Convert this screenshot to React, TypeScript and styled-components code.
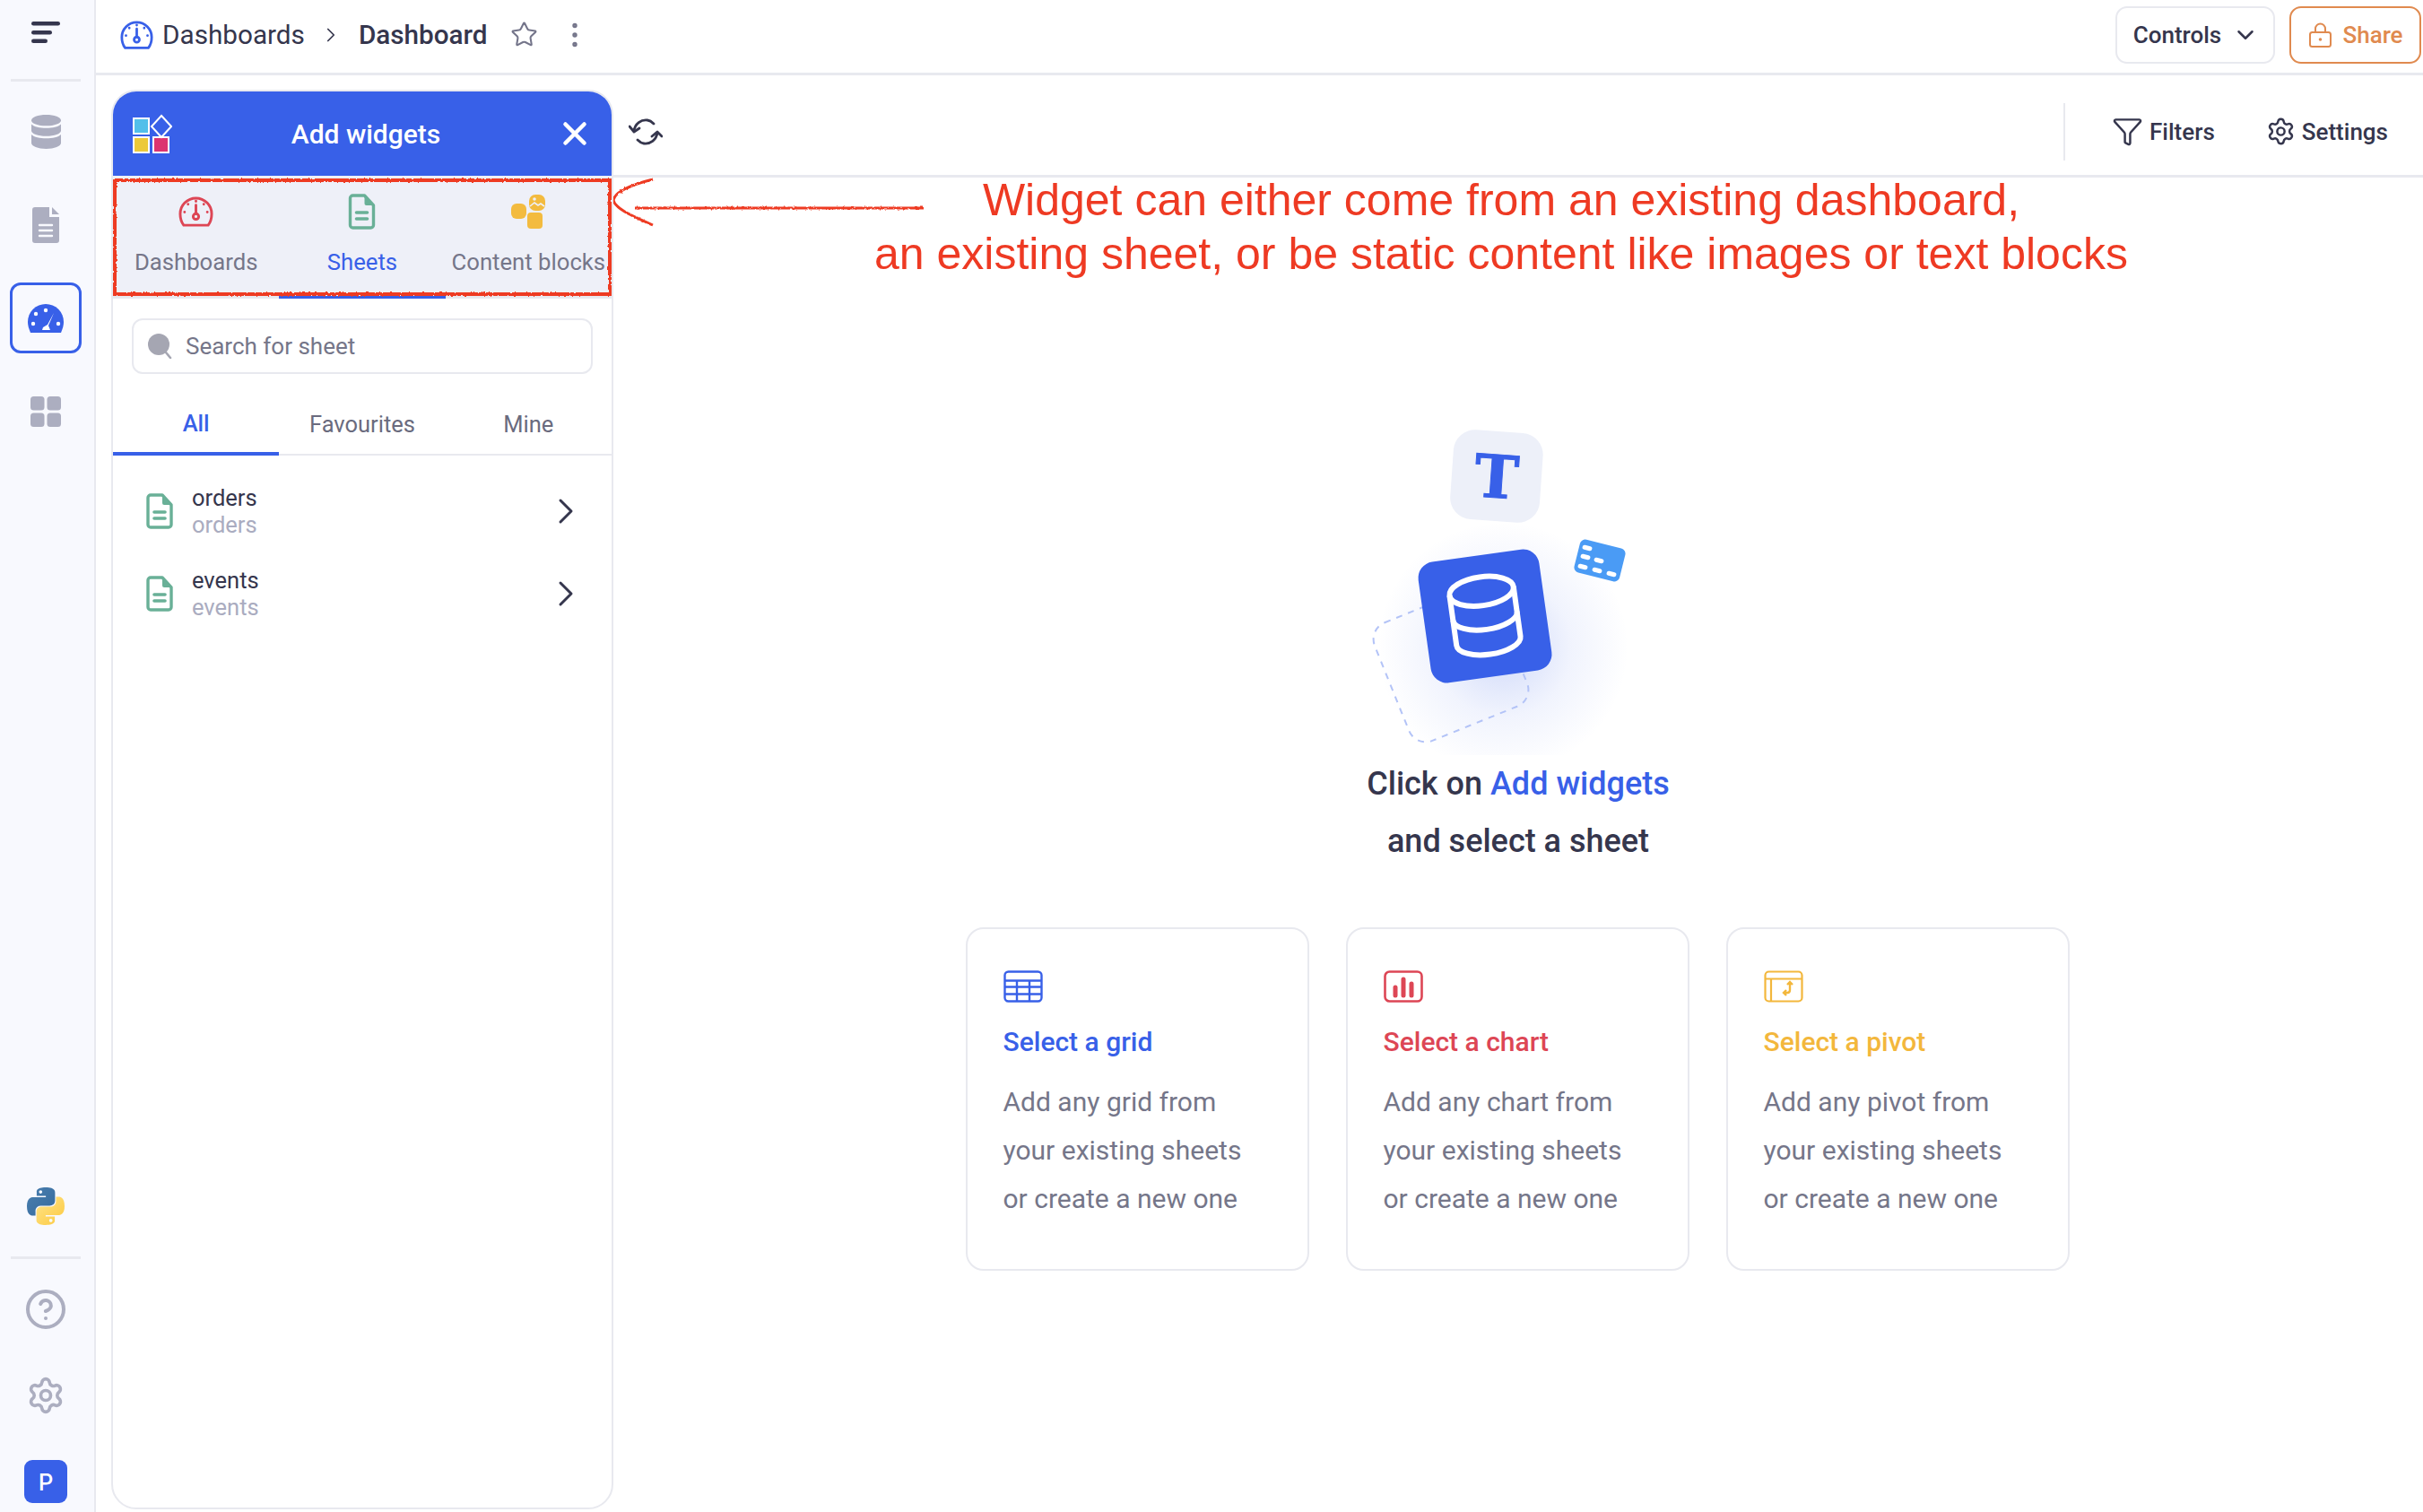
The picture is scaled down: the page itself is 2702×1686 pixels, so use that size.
import React from 'react'
import styled, { createGlobalStyle } from 'styled-components'
import { ChevronDown, ChevronRight, CircleHelp, EllipsisVertical, Funnel, Settings, Star, X } from 'lucide-react'

const BLUE = '#3860e8'
const RED = '#ee3a23'
const LINE = '#e8e9ef'
const INK = '#35364d'
const GREY = '#757689'

const GlobalStyle = createGlobalStyle`
  html, body {
    margin: 0;
    padding: 0;
    background: #fff;
  }
  * {
    box-sizing: border-box;
  }
  body {
    font-family: Roboto, "Liberation Sans", sans-serif;
    color: ${INK};
  }
`

const Page = styled.div`
  display: flex;
  height: 1686px;
  overflow: hidden;
  width: 2702px;
`

const Sidebar = styled.nav`
  align-items: center;
  background: #f8f9fe;
  border-right: 2px solid ${LINE};
  display: flex;
  flex-direction: column;
  flex-shrink: 0;
  height: 100%;
  padding: 0 3px 10px 0;
  width: 107px;
`

const SideTop = styled.div`
  align-items: center;
  display: flex;
  height: 88px;
  justify-content: center;
  padding-bottom: 16px;
`

const SideDivider = styled.div`
  background: ${LINE};
  flex-shrink: 0;
  height: 3px;
  width: 78px;
`

const NavSlots = styled.div`
  display: flex;
  flex-direction: column;
  gap: 25px;
  margin-top: 16px;
`

const NavSlot = styled.div<{ $active?: boolean }>`
  align-items: center;
  border: 3px solid ${(p) => (p.$active ? BLUE : 'transparent')};
  border-radius: 12px;
  display: flex;
  height: 79px;
  justify-content: center;
  width: 80px;
`

const SideBottom = styled.div`
  align-items: center;
  display: flex;
  flex-direction: column;
  gap: 32px;
  margin-top: auto;
`

const BottomIcons = styled.div`
  align-items: center;
  color: #acaec0;
  display: flex;
  flex-direction: column;
  gap: 48px;
`

const BottomSlot = styled.div`
  align-items: center;
  display: flex;
  height: 48px;
  justify-content: center;
  width: 48px;
`

const Avatar = styled.div`
  align-items: center;
  background: ${BLUE};
  border-radius: 9px;
  color: #fff;
  display: flex;
  font-family: Inter, sans-serif;
  font-size: 26px;
  font-weight: 500;
  height: 48px;
  justify-content: center;
  width: 48px;
`

const Content = styled.div`
  display: flex;
  flex: 1;
  flex-direction: column;
  min-width: 0;
`

const TopBar = styled.header`
  align-items: center;
  border-bottom: 3px solid ${LINE};
  display: flex;
  flex-shrink: 0;
  height: 84px;
  padding: 0 2px 4px 27px;
`

const Crumb = styled.span<{ $current?: boolean }>`
  font-size: 29.7px;
  font-weight: ${(p) => (p.$current ? 500 : 400)};
  margin-left: ${(p) => (p.$current ? 18 : 10)}px;
`

const CrumbSep = styled.span`
  align-items: center;
  color: ${INK};
  display: flex;
  margin-left: 16px;
`

const FavIcon = styled.span`
  color: #74758a;
  display: flex;
  margin-left: 25px;
`

const MoreIcon = styled.span`
  color: #74758a;
  display: flex;
  margin-left: 23px;
`

const TopActions = styled.div`
  display: flex;
  gap: 16px;
  margin-left: auto;
`

const TopButton = styled.button<{ $accent?: boolean }>`
  align-items: center;
  background: #fff;
  border: 2px solid ${(p) => (p.$accent ? '#e08a4f' : LINE)};
  border-radius: 13px;
  color: ${(p) => (p.$accent ? '#e08a4f' : INK)};
  display: flex;
  font-family: inherit;
  font-size: 26px;
  font-weight: 500;
  gap: 12px;
  height: 64px;
  justify-content: center;
  padding: 0 0 0 2px;
  width: ${(p) => (p.$accent ? 147 : 178)}px;
`

const Body = styled.div`
  display: flex;
  flex: 1;
  min-height: 0;
`

const Panel = styled.aside`
  background: #fff;
  border: 2px solid ${LINE};
  border-radius: 28px;
  display: flex;
  flex-direction: column;
  flex-shrink: 0;
  margin: 16px 0 3px 17px;
  overflow: hidden;
  width: 560px;
`

const PanelHead = styled.div`
  align-items: center;
  background: ${BLUE};
  color: #fff;
  display: flex;
  flex-shrink: 0;
  font-size: 30px;
  font-weight: 500;
  height: 94px;
  justify-content: space-between;
  padding: 0 20px 0 22px;
`

const PanelTitle = styled.span`
  margin-left: 4px;
`

const SourceTabs = styled.div`
  background: #eef0f8;
  border-bottom: 3px solid ${LINE};
  display: grid;
  flex-shrink: 0;
  grid-template-columns: repeat(3, 1fr);
  height: 137px;
  position: relative;
`

const SourceTab = styled.div<{ $active?: boolean }>`
  align-items: center;
  color: ${(p) => (p.$active ? BLUE : GREY)};
  display: flex;
  flex-direction: column;
  font-size: 25.7px;
  gap: 16px;
  padding-top: 20px;
  position: relative;

  ${(p) =>
    p.$active &&
    `&::after {
      background: ${BLUE};
      bottom: -3px;
      content: '';
      height: 3px;
      left: 0;
      position: absolute;
      right: 0;
    }`}
`

const SourceIcon = styled.div`
  align-items: center;
  display: flex;
  height: 40px;
  justify-content: center;
`

const SourceLabel = styled.span`
  line-height: 40px;
  white-space: nowrap;
`

const MarkBox = styled.div`
  border: 4px solid ${RED};
  filter: url(#rough);
  inset: 3px 0 0 0;
  pointer-events: none;
  position: absolute;
`

const Search = styled.div`
  align-items: center;
  border: 2px solid ${LINE};
  border-radius: 12px;
  color: ${GREY};
  display: flex;
  flex-shrink: 0;
  font-size: 26px;
  gap: 15px;
  height: 62px;
  margin: 22px 21px 0 21px;
  padding-left: 16px;
`

const ScopeTabs = styled.div`
  border-bottom: 2px solid ${LINE};
  display: grid;
  flex-shrink: 0;
  grid-template-columns: repeat(3, 1fr);
  height: 68px;
  margin-top: 23px;
`

const ScopeTab = styled.div<{ $active?: boolean }>`
  align-items: center;
  border-bottom: ${(p) => (p.$active ? `4px solid ${BLUE}` : 'none')};
  color: ${(p) => (p.$active ? BLUE : '#6a6b7e')};
  display: flex;
  font-size: 25.5px;
  font-weight: ${(p) => (p.$active ? 500 : 400)};
  height: ${(p) => (p.$active ? 68 : 66)}px;
  justify-content: center;
`

const SheetList = styled.div`
  display: flex;
  flex-direction: column;
  margin-top: 16px;
`

const SheetRow = styled.div`
  align-items: center;
  display: flex;
  height: 92px;
  padding: 0 27px 0 37px;
`

const SheetText = styled.div`
  display: flex;
  flex-direction: column;
  font-size: 25.5px;
  line-height: 30px;
  margin-left: 21px;
`

const SheetSub = styled.span`
  color: #aaacc0;
`

const SheetChevron = styled.span`
  color: ${INK};
  display: flex;
  margin-left: auto;
`

const Main = styled.main`
  display: flex;
  flex: 1;
  flex-direction: column;
  min-width: 0;
  position: relative;
`

const Toolbar = styled.div`
  align-items: center;
  border-bottom: 3px solid ${LINE};
  display: flex;
  flex-shrink: 0;
  height: 114px;
  padding: 14px 39px 0 17px;
`

const ToolDivider = styled.div`
  background: ${LINE};
  height: 64px;
  margin-left: auto;
  width: 2px;
`

const ToolItem = styled.div<{ $offset: number }>`
  align-items: center;
  display: flex;
  font-size: 26px;
  font-weight: 500;
  gap: 7px;
  margin-left: ${(p) => p.$offset}px;
`

const Canvas = styled.div`
  align-items: center;
  display: flex;
  flex: 1;
  flex-direction: column;
  padding-top: 252px;
`

const Prompt = styled.div`
  font-size: 36px;
  font-weight: 500;
  line-height: 64px;
  text-align: center;
`

const PromptLink = styled.span`
  color: ${BLUE};
`

const Cards = styled.div`
  display: flex;
  gap: 41px;
  margin: 64px 2px 0 0;
`

const Card = styled.div`
  border: 2px solid ${LINE};
  border-radius: 20px;
  height: 383px;
  padding: 46px 0 0 40px;
  width: 383px;
`

const CardIcon = styled.div`
  display: flex;
  height: 36px;
`

const CardTitle = styled.div<{ $color: string }>`
  color: ${(p) => p.$color};
  font-size: 30px;
  font-weight: 500;
  line-height: 40px;
  margin-top: 24px;
`

const CardBody = styled.div`
  color: ${GREY};
  font-size: 30px;
  line-height: 54px;
  margin-top: 20px;
`

const Note = styled.div`
  color: ${RED};
  font-family: "Liberation Sans", Arial, sans-serif;
  font-size: 50px;
  left: 291px;
  line-height: 60px;
  position: absolute;
  text-align: center;
  top: 109px;
  white-space: nowrap;
`

const NoteArrow = styled.svg`
  filter: url(#rough);
  left: 0;
  position: absolute;
  top: 114px;
`

const HiddenDefs = styled.svg`
  height: 0;
  position: absolute;
  width: 0;
`

const GaugeOutline = ({ color, size }: { color: string; size: number }) => (
  <svg width={size} height={size * 0.9} viewBox="0 0 40 36" fill="none" stroke={color} strokeWidth="3" strokeLinecap="round">
    <path d="M6 34 C3 30 2 26 2 21 A18 18 0 0 1 38 21 C38 26 37 30 34 34 Z" />
    <circle cx="20" cy="24" r="3.2" />
    <path d="M20 20.5V11M20 6.5v.1M11 10v.1M29 10v.1M7 19v.1M33 19v.1" />
  </svg>
)

const SheetIcon = ({ color, width, height }: { color: string; width: number; height: number }) => (
  <svg width={width} height={height} viewBox="0 0 30 40" fill="none">
    <path d="M5 2h13l10 11v22a3 3 0 0 1-3 3H5a3 3 0 0 1-3-3V5a3 3 0 0 1 3-3z" stroke={color} strokeWidth="3.4" strokeLinejoin="round" />
    <path d="M18 2l10 11h-8a2 2 0 0 1-2-2z" fill={color} />
    <path d="M9 21h12M9 28h12" stroke={color} strokeWidth="3.6" strokeLinecap="round" />
  </svg>
)

const MenuGlyph = () => (
  <svg width="32" height="24" viewBox="0 0 32 24" fill="#35364d">
    <rect x="0" y="0" width="32" height="4.6" rx="2.3" />
    <rect x="0" y="10" width="23" height="4.6" rx="2.3" />
    <rect x="0" y="19.4" width="18" height="4.6" rx="2.3" />
  </svg>
)

const DatabaseFilled = () => (
  <svg width="33" height="38" viewBox="0 0 33 38" fill="#acaec0">
    <path d="M16.5 0C7.4 0 0 2.7 0 6.2s7.4 6.1 16.5 6.1S33 9.7 33 6.2 25.6 0 16.5 0z" />
    <path d="M0 10.5v7.3c0 3.4 7.4 6 16.5 6s16.5-2.6 16.5-6v-7.3c-3 3-9.4 4.3-16.5 4.3S3 13.5 0 10.5z" />
    <path d="M0 22v9.5C0 35 7.4 38 16.5 38S33 35 33 31.5V22c-3 3-9.4 4.3-16.5 4.3S3 25 0 22z" />
  </svg>
)

const DocFilled = () => (
  <svg width="30" height="40" viewBox="0 0 30 40">
    <path d="M3 0h16v11h11v26a3 3 0 0 1-3 3H3a3 3 0 0 1-3-3V3a3 3 0 0 1 3-3z" fill="#acaec0" />
    <path d="M22 0l8 8h-8z" fill="#acaec0" />
    <path d="M8 20h14M8 26h14M8 32h14" stroke="#f8f9fe" strokeWidth="2.4" strokeLinecap="round" />
  </svg>
)

const GaugeFilled = () => (
  <svg width="40" height="32" viewBox="0 0 40 32">
    <path d="M3 32C1 27 0 24 0 20a20 20 0 0 1 40 0c0 4-1 7-3 12z" fill={BLUE} />
    <circle cx="20" cy="7" r="2.2" fill="#fff" />
    <circle cx="9" cy="11" r="2.2" fill="#fff" />
    <circle cx="6" cy="22" r="2.2" fill="#fff" />
    <circle cx="34" cy="22" r="2.2" fill="#fff" />
    <path d="M29 10L23 24l2 5h-9l1-3 5-3z" fill="#fff" />
  </svg>
)

const GridFilled = () => (
  <svg width="34" height="34" viewBox="0 0 34 34" fill="#acaec0">
    <rect x="0" y="0" width="15.5" height="15.5" rx="3.5" />
    <rect x="18.5" y="0" width="15.5" height="15.5" rx="3.5" />
    <rect x="0" y="18.5" width="15.5" height="15.5" rx="3.5" />
    <rect x="18.5" y="18.5" width="15.5" height="15.5" rx="3.5" />
  </svg>
)

const PYTHON_HALF =
  'M54.9 0C26.9 0 28.6 12.2 28.6 12.2v12.6h26.7v3.8H18S0 26.5 0 54.9s15.7 27.4 15.7 27.4h9.4V69.1s-.5-15.7 15.5-15.7h26.6s15 .2 15-14.5V14.6S84.5 0 54.9 0zM40.1 8.5c2.7 0 4.8 2.2 4.8 4.8s-2.2 4.8-4.8 4.8-4.8-2.2-4.8-4.8 2.2-4.8 4.8-4.8z'

const PythonLogo = () => (
  <svg width="42" height="42" viewBox="0 0 110 110">
    <defs>
      <linearGradient id="py-blue" x1="0" y1="0" x2="1" y2="1">
        <stop offset="0" stopColor="#4a7fb0" />
        <stop offset="1" stopColor="#356a9c" />
      </linearGradient>
      <linearGradient id="py-yellow" x1="0" y1="0" x2="1" y2="1">
        <stop offset="0" stopColor="#fcc93f" />
        <stop offset="1" stopColor="#ffe48a" />
      </linearGradient>
    </defs>
    <path fill="url(#py-blue)" d={PYTHON_HALF} />
    <path fill="url(#py-yellow)" transform="rotate(180 55 55)" d={PYTHON_HALF} />
  </svg>
)

const WidgetsLogo = () => (
  <svg width="44" height="44" viewBox="0 0 44 44">
    <rect x="1" y="5" width="17" height="17" fill="#52bfea" stroke="#fff" strokeWidth="2" />
    <rect x="1" y="26" width="17" height="17" fill="#ecc93a" stroke="#fff" strokeWidth="2" />
    <rect x="23" y="26" width="17" height="17" fill="#dc3470" stroke="#fff" strokeWidth="2" />
    <path d="M32 2l11 12-11 12-11-12z" fill={BLUE} stroke="#fff" strokeWidth="2" />
  </svg>
)

const BlocksIcon = () => (
  <svg width="38" height="38" viewBox="0 0 38 38" fill="#f3bb3f">
    <rect x="0" y="10" width="17" height="17" rx="6" />
    <rect x="20" y="0" width="18" height="18" rx="7" />
    <circle cx="26" cy="5" r="1.8" fill="#eef0f8" />
    <path d="M21 13l5-4 4 3 3-2 4 3" fill="none" stroke="#eef0f8" strokeWidth="1.6" />
    <rect x="18" y="20" width="17" height="18" rx="4" />
  </svg>
)

const LockGlyph = () => (
  <svg width="25" height="28" viewBox="0 0 25 28" fill="none" stroke="#e08a4f" strokeWidth="2">
    <rect x="1" y="11" width="23" height="16" rx="2.5" />
    <path d="M7 11V7a5.5 5.5 0 0 1 11 0v4" />
    <circle cx="12.5" cy="19" r=".8" fill="#e08a4f" />
  </svg>
)

const RefreshGlyph = () => (
  <svg width="38" height="30" viewBox="0 0 38 30" fill="none" stroke={INK} strokeWidth="2.8" strokeLinecap="round" strokeLinejoin="round">
    <path d="M6 14C7 6 14 1 21 2c3 .4 5 2 7 4" />
    <path d="M1 9l5 6 6-4" />
    <path d="M32 16c-1 8-8 13-15 12-3-.4-5-2-7-4" />
    <path d="M26 20l6-5 5 5" />
  </svg>
)

const GridGlyph = () => (
  <svg width="44" height="36" viewBox="0 0 44 36" fill="none" stroke={BLUE} strokeWidth="2.4">
    <rect x="1.5" y="1.5" width="41" height="33" rx="4" />
    <path d="M1.5 11.5h41M1.5 18.5h41M1.5 26.5h41M15 12v22M29 12v22" />
  </svg>
)

const ChartGlyph = () => (
  <svg width="44" height="36" viewBox="0 0 44 36" fill="none">
    <rect x="1.5" y="1.5" width="41" height="33" rx="5" stroke="#dd4655" strokeWidth="2.6" />
    <path d="M13 28v-9M22 28V10M31 28V15" stroke="#dd4655" strokeWidth="5" strokeLinecap="round" />
  </svg>
)

const PivotGlyph = () => (
  <svg width="44" height="36" viewBox="0 0 44 36" fill="none" stroke="#f3b73c" strokeWidth="2.2">
    <rect x="1.5" y="1.5" width="41" height="33" rx="4" />
    <path d="M1.5 9.5h41M8 9.5v25" />
    <path d="M29 13v9c0 2-1 3-3 3h-4M26 16l3-3 3 3M25 22l-3 3 3 3" strokeWidth="2.4" />
  </svg>
)

const SearchGlyph = () => (
  <svg width="27" height="28" viewBox="0 0 27 28">
    <circle cx="12" cy="12" r="12" fill="#a5a6b2" />
    <path d="M20 21l5 6" stroke="#a5a6b2" strokeWidth="2.6" strokeLinecap="round" />
  </svg>
)

const tableDashes = [[289, 161], [287, 171], [302, 175], [284, 182], [300, 186], [316, 190]]

const Illustration = () => (
  <svg width="424" height="392" viewBox="0 0 424 392">
    <defs>
      <radialGradient id="glow">
        <stop offset="0" stopColor={BLUE} stopOpacity="0.24" />
        <stop offset="0.55" stopColor={BLUE} stopOpacity="0.07" />
        <stop offset="1" stopColor={BLUE} stopOpacity="0" />
      </radialGradient>
    </defs>
    <circle cx="195" cy="272" r="140" fill="url(#glow)" />
    <rect x="66" y="220" width="142" height="142" rx="20" transform="rotate(-22 137 291)" fill="none" stroke="#b3c3f7" strokeWidth="2" strokeDasharray="7 7" />
    <g transform="rotate(4 188 80)">
      <rect x="138" y="31" width="100" height="100" rx="24" fill="#edf0f9" />
      <text x="188" y="105" textAnchor="middle" fontFamily="DejaVu Serif, serif" fontWeight="700" fontSize="66" fill={BLUE} stroke={BLUE} strokeWidth="1">T</text>
    </g>
    <g transform="rotate(-8 175 237)">
      <rect x="107" y="169" width="136" height="136" rx="18" fill={BLUE} />
      <g fill="none" stroke="#fff" strokeWidth="6">
        <ellipse cx="175" cy="209" rx="36" ry="16" />
        <path d="M139 209v56c0 8 16 15 36 15s36-7 36-15v-56" />
        <path d="M139 237c0 8 16 15 36 15s36-7 36-15" />
      </g>
    </g>
    <g transform="rotate(14 303 175)">
      <rect x="277" y="156" width="52" height="38" rx="6" fill="#4a9bf5" />
    </g>
    {tableDashes.map(([x, y]) => (
      <rect key={`${x}-${y}`} x={x - 5.5} y={y - 2.5} width="11" height="5" rx="2.5" fill="#fff" transform={`rotate(14 ${x} ${y})`} />
    ))}
  </svg>
)

const cards = [
  { title: 'Select a grid', color: BLUE, noun: 'grid', icon: <GridGlyph /> },
  { title: 'Select a chart', color: '#dd4655', noun: 'chart', icon: <ChartGlyph /> },
  { title: 'Select a pivot', color: '#f3b73c', noun: 'pivot', icon: <PivotGlyph /> },
]

const sheets = ['orders', 'events']

export default function App() {
  return (
    <Page>
      <GlobalStyle />
      <HiddenDefs>
        <filter id="rough">
          <feTurbulence type="fractalNoise" baseFrequency="0.35" numOctaves="2" seed="4" />
          <feDisplacementMap in="SourceGraphic" scale="3" />
        </filter>
      </HiddenDefs>
      <Sidebar>
        <SideTop>
          <MenuGlyph />
        </SideTop>
        <SideDivider />
        <NavSlots>
          <NavSlot><DatabaseFilled /></NavSlot>
          <NavSlot><DocFilled /></NavSlot>
          <NavSlot $active><GaugeFilled /></NavSlot>
          <NavSlot><GridFilled /></NavSlot>
        </NavSlots>
        <SideBottom>
          <BottomSlot><PythonLogo /></BottomSlot>
          <SideDivider />
          <BottomIcons>
            <BottomSlot><CircleHelp size={50} strokeWidth={2} /></BottomSlot>
            <BottomSlot><Settings size={44} strokeWidth={2} /></BottomSlot>
            <Avatar>P</Avatar>
          </BottomIcons>
        </SideBottom>
      </Sidebar>
      <Content>
        <TopBar>
          <GaugeOutline color={BLUE} size={37} />
          <Crumb>Dashboards</Crumb>
          <CrumbSep><ChevronRight size={26} strokeWidth={1.6} /></CrumbSep>
          <Crumb $current>Dashboard</Crumb>
          <FavIcon><Star size={31} strokeWidth={1.6} /></FavIcon>
          <MoreIcon><EllipsisVertical size={36} strokeWidth={1.6} /></MoreIcon>
          <TopActions>
            <TopButton>Controls<ChevronDown size={30} strokeWidth={2} /></TopButton>
            <TopButton $accent><LockGlyph />Share</TopButton>
          </TopActions>
        </TopBar>
        <Body>
          <Panel>
            <PanelHead>
              <WidgetsLogo />
              <PanelTitle>Add widgets</PanelTitle>
              <X size={42} strokeWidth={2.6} />
            </PanelHead>
            <SourceTabs>
              <SourceTab>
                <SourceIcon><GaugeOutline color="#dd4655" size={39} /></SourceIcon>
                <SourceLabel>Dashboards</SourceLabel>
              </SourceTab>
              <SourceTab $active>
                <SourceIcon><SheetIcon color="#69b097" width={31} height={40} /></SourceIcon>
                <SourceLabel>Sheets</SourceLabel>
              </SourceTab>
              <SourceTab>
                <SourceIcon><BlocksIcon /></SourceIcon>
                <SourceLabel>Content blocks</SourceLabel>
              </SourceTab>
              <MarkBox />
            </SourceTabs>
            <Search>
              <SearchGlyph />
              Search for sheet
            </Search>
            <ScopeTabs>
              <ScopeTab $active>All</ScopeTab>
              <ScopeTab>Favourites</ScopeTab>
              <ScopeTab>Mine</ScopeTab>
            </ScopeTabs>
            <SheetList>
              {sheets.map((name) => (
                <SheetRow key={name}>
                  <SheetIcon color="#69b097" width={30} height={40} />
                  <SheetText>
                    <span>{name}</span>
                    <SheetSub>{name}</SheetSub>
                  </SheetText>
                  <SheetChevron><ChevronRight size={48} strokeWidth={1.5} /></SheetChevron>
                </SheetRow>
              ))}
            </SheetList>
          </Panel>
          <Main>
            <Toolbar>
              <RefreshGlyph />
              <ToolDivider />
              <ToolItem $offset={52}><Funnel size={35} strokeWidth={1.7} />Filters</ToolItem>
              <ToolItem $offset={57}><Settings size={33} strokeWidth={1.8} />Settings</ToolItem>
            </Toolbar>
            <Canvas>
              <Illustration />
              <Prompt>
                Click on <PromptLink>Add widgets</PromptLink>
                <br />
                and select a sheet
              </Prompt>
              <Cards>
                {cards.map((card) => (
                  <Card key={card.noun}>
                    <CardIcon>{card.icon}</CardIcon>
                    <CardTitle $color={card.color}>{card.title}</CardTitle>
                    <CardBody>
                      Add any {card.noun} from
                      <br />
                      your existing sheets
                      <br />
                      or create a new one
                    </CardBody>
                  </Card>
                ))}
              </Cards>
            </Canvas>
            <NoteArrow width="350" height="60" viewBox="0 0 350 60" fill="none" stroke={RED} strokeWidth="3">
              <path d="M24 34H346" />
              <path d="M44 2C20 8 2 16 0 25c2 10 22 18 44 28" />
            </NoteArrow>
            <Note>
              Widget can either come from an existing dashboard,
              <br />
              an existing sheet, or be static content like images or text blocks
            </Note>
          </Main>
        </Body>
      </Content>
    </Page>
  )
}
